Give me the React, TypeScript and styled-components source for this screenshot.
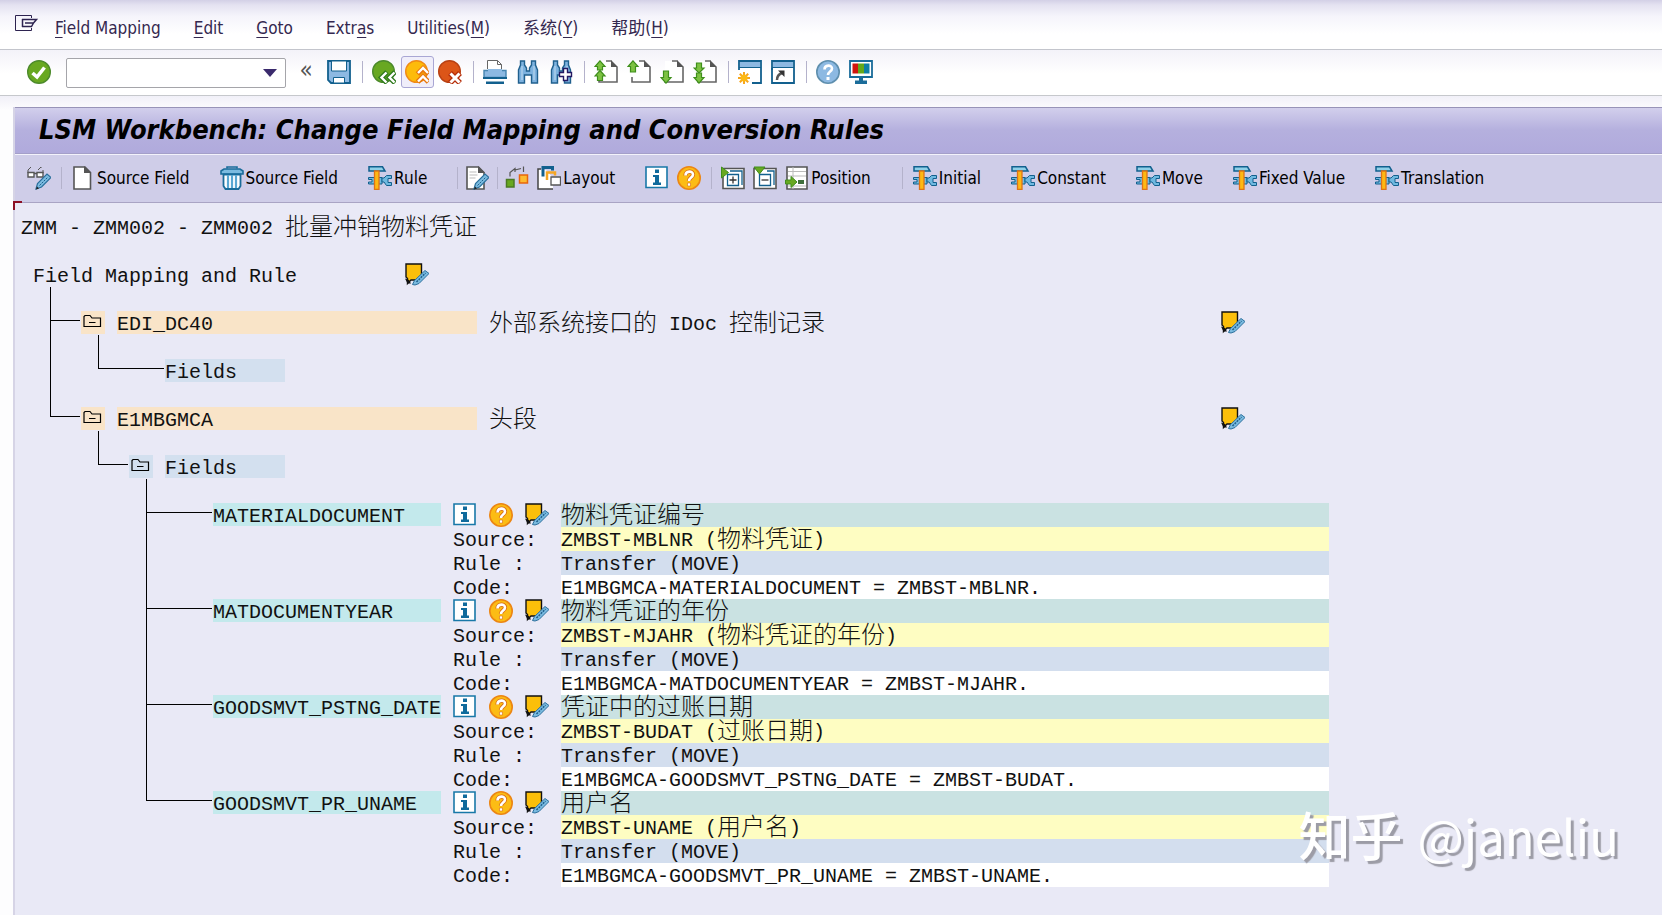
import React from "react";
import styled, { createGlobalStyle, css } from "styled-components";

const UI_FONT = `"DejaVu Sans Condensed", "Noto Sans", "Noto Sans CJK SC", sans-serif`;
const LIST_FONT = `"Liberation Mono", "Noto Sans CJK SC", monospace`;

const GlobalStyle = createGlobalStyle`
  *, *::before, *::after { box-sizing: border-box; }
  body { margin: 0; background: #fff; font-family: ${UI_FONT}; }
  button { font: inherit; color: inherit; background: none; border: 0; padding: 0; margin: 0; cursor: pointer; }
  h1, p, ul { margin: 0; padding: 0; }
  ul { list-style: none; }
  svg { display: block; flex: none; }
`;

/* ---------- icons ---------- */

const Svg = ({ children, size = 24 }: { children: React.ReactNode; size?: number }) => (
  <svg width={size} height={size} viewBox="0 0 24 24" fill="none" aria-hidden="true">
    {children}
  </svg>
);

const MenuExitIcon = () => (
  <Svg>
    <path d="M16.500 5V2.500H.500v15h16V15" stroke="#2d2350" />
    <path d="M7 6.500h14.500L18.500 10H12M7.500 6v8M7 13.500h9.500L18.500 10M12 10h-2" stroke="#2d2350" strokeWidth="1.500" />
  </Svg>
);

const CheckIcon = () => (
  <Svg>
    <circle cx="12" cy="12" r="11.300" fill="#68a821" stroke="#4c8a2c" strokeWidth="1.400" />
    <path d="M5.500 13l4.500 4L17.500 7.500" stroke="#fff" strokeWidth="3.600" />
  </Svg>
);

const SaveIcon = () => (
  <Svg>
    <path d="M1 1h22v22H4l-3-3z" fill="#8db9e2" stroke="#12608e" strokeWidth="1.800" />
    <path d="M4.500 1h15v10h-15z" fill="#fff" stroke="#12608e" />
    <path d="M6.500 17.500h11V23h-11z" fill="#fff" stroke="#12608e" />
  </Svg>
);

const BackIcon = () => (
  <Svg>
    <circle cx="11.500" cy="11.500" r="10.800" fill="#68a821" stroke="#4c8a2c" strokeWidth="1.400" />
    <path d="M15 12l-5.500 5.500L15 23M23 12l-5.500 5.500L23 23" stroke="#2f7a1c" strokeWidth="5" />
    <path d="M14.500 12.500l-5 5 5 5M22.500 12.500l-5 5 5 5" stroke="#fff" strokeWidth="2.400" />
  </Svg>
);

const UpIcon = () => (
  <Svg>
    <circle cx="11.500" cy="11.500" r="10.800" fill="#fdbb0a" stroke="#f08a16" strokeWidth="1.400" />
    <path d="M12.500 14l5.500-5.500 5.500 5.500M12.500 22l5.500-5.500 5.500 5.500" stroke="#e8770c" strokeWidth="5" />
    <path d="M13 13l5-5 5 5M13 21.500l5-5 5 5" stroke="#fff" strokeWidth="2.400" />
  </Svg>
);

const CancelIcon = () => (
  <Svg>
    <circle cx="11.500" cy="11.500" r="10.800" fill="#dc5518" stroke="#b84114" strokeWidth="1.400" />
    <path d="M12 13l10 10M22 13L12 23" stroke="#b52d08" strokeWidth="5.500" />
    <path d="M12.500 13.500l9 9M21.500 13.500l-9 9" stroke="#fff" strokeWidth="3" />
  </Svg>
);

const PrintIcon = () => (
  <Svg>
    <path d="M4.500 9V.500h10l4 4V9" fill="#fff" stroke="#666" />
    <path d="M14.500.500v4h4" stroke="#666" />
    <path d="M1 10.500h22v7H1z" fill="#8db9e2" stroke="#4685b0" strokeWidth="1.400" />
    <path d="M5 9h14v3H5z" fill="#8db9e2" />
    <path d="M0 17h24v2H0zM3 21.500h18V24H3z" fill="#12608e" />
  </Svg>
);

const Binoculars = () => (
  <>
    <path d="M4.500 1h4v4l2 3v3h3V8l2-3V1h4v4L21.500 10v13h-6v-8h-7v8h-6V10L4.500 5z" fill="#7db2df" stroke="#20608e" strokeWidth="1.400" />
    <path d="M6 6v14M18 6v14" stroke="#c3dcf1" />
  </>
);

const FindIcon = () => (
  <Svg>
    <Binoculars />
  </Svg>
);

const FindNextIcon = () => (
  <Svg>
    <Binoculars />
    <path d="M14.500 8.500h4v4h4v4h-4v4h-4v-4h-4v-4h4z" fill="#fff" stroke="#241a64" strokeWidth="1.400" />
  </Svg>
);

const PAGE_ARROWS = {
  first: ["M6 .800l5 5.700H8.500v3.500h-5V6.500H1z", "M6 10.500l5 5.500H8.500v4.500h-5V16H1z"],
  previous: ["M6 .800l5 5.700H8.500v5.500h-5V6.500H1z"],
  next: ["M6 23.200l5-5.700H8.500V11h-5v6.500H1z"],
  last: ["M6 13l5-5H8.500V3h-5v5H1z", "M6 23.200l5-5.700H8.500V13h-5v4.500H1z"],
};

const PageIcon = ({ kind }: { kind: keyof typeof PAGE_ARROWS }) => (
  <Svg>
    <path d="M5 1h13l5 5v16H5z" fill="#fff" />
    <path d="M12 1h5.500M23 7v15H5v-5" stroke="#666" strokeWidth="1.600" />
    <path d="M17 0l7 7h-7z" fill="#555" />
    {PAGE_ARROWS[kind].map((d) => (
      <path key={d} d={d} fill="#7dc242" stroke="#3f8f1c" strokeWidth="1.200" />
    ))}
  </Svg>
);

const SessionWindow = () => (
  <>
    <path d="M1 1h22v22H1z" fill="#fff" />
    <path d="M1 7V1h22v22h-9M1 7v3" stroke="#12608e" strokeWidth="1.800" />
    <path d="M2 2h20v5H2z" fill="#8db9e2" />
    <path d="M1 7.500h22" stroke="#12608e" />
  </>
);

const NewSessionIcon = () => (
  <Svg>
    <SessionWindow />
    <path d="M6 12v12M0 18h12M1.800 13.800l8.400 8.400M10.200 13.800l-8.400 8.400" stroke="#f6a51c" strokeWidth="2" />
    <circle cx="6" cy="18" r="3.500" fill="#fcb913" />
  </Svg>
);

const ShortcutIcon = () => (
  <Svg>
    <SessionWindow />
    <path d="M1 8v15h14" stroke="#12608e" strokeWidth="1.800" />
    <path d="M6 20c0-4 2-6 5-7" stroke="#555" strokeWidth="2.500" />
    <path d="M7 10.500h6.500V17z" fill="#333" />
  </Svg>
);

const HelpIcon = () => (
  <Svg>
    <circle cx="12" cy="12" r="11.200" fill="#8db9e2" stroke="#5f8fae" strokeWidth="1.600" />
    <path d="M8.500 9.500c0-5 7.500-5 7.500-1 0 3-4 3-4 6.500" stroke="#fff" strokeWidth="2.600" />
    <path d="M10.500 17h3v3h-3z" fill="#fff" />
  </Svg>
);

const MonitorIcon = () => (
  <Svg>
    <path d="M1 1h22v16H1z" fill="#fff" stroke="#1a6c9a" strokeWidth="1.800" />
    <path d="M3.500 3.500h5.500v10H3.500z" fill="#d0160c" />
    <path d="M9 3.500h6v10H9z" fill="#64a818" />
    <path d="M15 3.500h5.500v10H15z" fill="#0e7fa4" />
    <path d="M10 17h4v4h-4zM6 20.500h12V24H6z" fill="#1a6c9a" />
  </Svg>
);

const Pencil = () => (
  <>
    <path d="M9 23l1.500-5.500L20 8l4 3.500-9.500 9.500z" fill="#7bbbe0" stroke="#2a6f9c" strokeWidth="1.200" />
    <path d="M12.500 19.500l8-8" stroke="#1d5f8c" strokeDasharray="2 1" />
    <path d="M9 23.500l1-3 2 2z" fill="#222" />
  </>
);

const DisplayChangeIcon = () => (
  <Svg>
    <path d="M1 7V4l3-3M11 4l3-3v1M16 4v3" stroke="#555" />
    <path d="M1 6.500h6v4.500H1zM10 6.500h6v4.500h-6zM7 7.500h3" fill="#fff" stroke="#555" strokeWidth="1.400" />
    <Pencil />
  </Svg>
);

const NewPageIcon = () => (
  <Svg>
    <path d="M3 1h11l5.500 5.500V23H3z" fill="#fff" stroke="#555" strokeWidth="1.600" />
    <path d="M13 0l7 7h-7z" fill="#555" />
  </Svg>
);

const TrashIcon = () => (
  <Svg>
    <path d="M7 2.500V1h10v1.500" stroke="#1a6c9a" strokeWidth="1.600" />
    <path d="M4 3h16l3 2v3H1V5z" fill="#7bbbe0" stroke="#1a6c9a" strokeWidth="1.600" />
    <path d="M3.500 8.500h17V20l-2 3h-13l-2-3z" fill="#fff" stroke="#1a6c9a" strokeWidth="1.800" />
    <path d="M8 9v13M12 9v13M16 9v13" stroke="#5aa7d2" strokeWidth="2.200" />
  </Svg>
);

const RuleIcon = () => (
  <Svg>
    <path d="M.500 11.500H14V18H.500v-2H4v-2.500H.500z" fill="#6fb9e0" stroke="#12608e" />
    <path d="M23.500 9.500h-5l-2.500 2.500h-2v4h2l2.500 3.500h5v-3h-3.500v-4h3.500z" fill="#6fb9e0" stroke="#12608e" />
    <path d="M1 .800h13.500L17 5H1z" fill="#8fd0e8" stroke="#12608e" strokeWidth="1.500" />
    <path d="M6.500 5h4.500v18.500H6.500z" fill="#fdb913" stroke="#e07414" strokeWidth="1.300" />
  </Svg>
);

const NoteEditIcon = () => (
  <Svg>
    <path d="M2 1h11.500L19 6.500V23H2z" fill="#fff" stroke="#555" strokeWidth="1.600" />
    <path d="M13 0l7 7h-7z" fill="#555" />
    <path d="M4.500 6h7M4.500 9h8M4.500 12h6" stroke="#bbb" />
    <Pencil />
  </Svg>
);

const AssignIcon = () => (
  <Svg>
    <path d="M5 10.500V6.500L10 2.500V6M10 4l6-1.500M18.500.500V6" stroke="#555" strokeWidth="1.200" />
    <path d="M1.500 13.500h7.500V21H1.500z" fill="#68a821" stroke="#4c7a24" strokeWidth="1.500" />
    <path d="M14.500 9h8v8h-8z" fill="#fdbb30" stroke="#e8650c" strokeWidth="1.500" />
  </Svg>
);

const LayoutIcon = () => (
  <Svg>
    <path d="M1 3v20h15V12L9 4z" fill="#fff" />
    <path d="M4 3H1v20h15" stroke="#444" strokeWidth="1.500" />
    <path d="M6 10.500V1.500h9.500v3" stroke="#12608e" strokeWidth="3" />
    <path d="M10 14V6.500h8v3" stroke="#f5a623" strokeWidth="2.500" />
    <path d="M14 11h9.500v8H14z" fill="#fff" stroke="#555" strokeWidth="1.300" />
  </Svg>
);

const InfoIcon = () => (
  <Svg>
    <path d="M1 1h21v20.500H1z" fill="#fff" stroke="#1878a8" strokeWidth="1.600" />
    <path d="M10 3.500h4v3.500h-4zM8 9h6v7.500h2V19H8v-2.500h2V11H8z" fill="#0f6a9c" />
  </Svg>
);

const QuestionIcon = () => (
  <Svg>
    <circle cx="12" cy="12" r="11.200" fill="#fcbc14" stroke="#ec8614" strokeWidth="1.600" />
    <path d="M8.500 9.500c0-5 7.500-5 7.500-1 0 3-4 3-4 6.500" stroke="#d86a10" strokeWidth="4.200" />
    <path d="M8.500 9.500c0-5 7.500-5 7.500-1 0 3-4 3-4 6.500" stroke="#fff" strokeWidth="2.600" />
    <path d="M10.500 17h3v3h-3z" fill="#fff" stroke="#d86a10" strokeWidth=".600" />
  </Svg>
);

const ExpandIcon = () => (
  <Svg>
    <path d="M2 2.500h21v20H2z" fill="#fff" stroke="#555" strokeWidth="1.600" />
    <path d="M6.500 8.500h11v11h-11zM9 5h12v14" fill="none" stroke="#12608e" strokeWidth="1.300" />
    <path d="M12 10.500v7M8.500 14h7" stroke="#333" strokeWidth="1.300" />
    <path d="M.500 1l7 5.500-7 5.500z" fill="#68a821" stroke="#3f8f1c" />
  </Svg>
);

const CollapseIcon = () => (
  <Svg>
    <path d="M1 2.500h22v20H1z" fill="#fff" stroke="#555" strokeWidth="1.600" />
    <path d="M6.500 8.500h11v11h-11zM14 5h7v14" fill="none" stroke="#12608e" strokeWidth="1.300" />
    <path d="M8.500 14h7" stroke="#333" strokeWidth="1.300" />
    <path d="M1 1h11L6.500 8z" fill="#68a821" stroke="#3f8f1c" />
  </Svg>
);

const PositionIcon = () => (
  <Svg>
    <path d="M2 1h20v22H2z" fill="#fff" stroke="#555" strokeWidth="1.600" />
    <path d="M3 5.500h18M8 1v22M3 10h18M3 20h18" stroke="#bbb" />
    <path d="M13 14h6v4h-6z" fill="#3f6f3c" />
    <path d="M.500 14H6v-3.500l6 5.500-6 5.500V18H.500z" fill="#68a821" stroke="#3f8f1c" />
  </Svg>
);

const NoteIcon = () => (
  <Svg>
    <path d="M1 1h15.500v13l-3 3H6l-3.500 3.500v-5L1 14z" fill="#fcbf0a" stroke="#111" strokeWidth="1.400" />
    <path d="M0 15.500l4 1.500 2 3.500H2.500z" fill="#111" />
    <path d="M7.500 21.500l2-4L20 7.500l4 3-10 10-4 1.500z" fill="#7bbbe0" stroke="#2a6f9c" />
    <path d="M11.500 19l9-9" stroke="#1d5f8c" strokeWidth="1.500" strokeDasharray="2 1" />
  </Svg>
);

const FolderIcon = () => (
  <Svg>
    <path d="M3 15.500V5.500l1-1h5l2 2.500h8.500v8.500z" stroke="#000" strokeWidth="1.200" />
    <path d="M8 11.500h6.500" stroke="#000" />
  </Svg>
);

/* ---------- window bars ---------- */

const Page = styled.div`
  position: relative;
  display: flex;
  flex-direction: column;
  min-height: 100vh;
  background: linear-gradient(#f1f0f8, #fdfdfe 14px) 0 96px no-repeat;
`;

const MenuBar = styled.nav`
  display: flex;
  align-items: center;
  gap: 33px;
  height: 50px;
  padding: 6px 15px 0;
  background: linear-gradient(#d3d0e6, #e4e2f1 5px, #f5f4fb 16px, #fff 34px);
  border-bottom: 1px solid #c3c5cc;
  color: #34284f;
  font-size: 17px;
  line-height: 24px;
  white-space: nowrap;
`;

const MenuItem = styled.button`
  text-underline-offset: 3px;
`;

const MenuIconButton = styled.button`
  margin: 0 -17px 6px 0;
`;

const SystemToolbar = styled.div`
  display: flex;
  align-items: center;
  height: 46px;
  padding: 0 23px 2px;
  background: linear-gradient(#f3f2f9, #fff 24px);
  border-bottom: 1px solid #c6c8cc;
`;

const IconButton = styled.button<{ $active?: boolean }>`
  display: flex;
  align-items: center;
  width: 33px;
  height: 32px;
  padding-left: 4px;
  ${(p) =>
    p.$active &&
    css`
      padding-left: 3px;
      background: #f0eefa;
      border: 1px solid #a9a6d4;
      border-radius: 3px;
    `}
`;

const CommandField = styled.div`
  display: flex;
  width: 220px;
  height: 30px;
  margin: 2px 8px 0 10px;
  background: #fff;
  border: 1px solid #a5a5aa;
  border-radius: 2px;
`;

const CommandInput = styled.input`
  flex: 1;
  min-width: 0;
  border: 0;
  padding: 0 6px;
  outline: 0;
  background: none;
  font: 17px ${UI_FONT};
`;

const CommandArrow = styled.button`
  display: flex;
  align-items: center;
  justify-content: center;
  width: 30px;
`;

const CollapseToolbar = styled.button`
  width: 29px;
  padding: 0 5px 4px 0;
  color: #555;
  font-size: 24px;
  line-height: 24px;
`;

const Divider = styled.span<{ $narrow?: boolean }>`
  flex: none;
  width: ${(p) => (p.$narrow ? 8 : 12)}px;
  height: 22px;
  background: linear-gradient(#b4b2cb, #b4b2cb) center / 1px 100% no-repeat;
`;

const Workspace = styled.main`
  flex: 1;
  display: flex;
  flex-direction: column;
  margin: 11px 0 0 13px;
  border-left: 2px solid #d6d4e6;
`;

const TitleBar = styled.header`
  height: 47px;
  padding-left: 24px;
  background: linear-gradient(#d2cfec, #b5b0de 22px, #b0aadc);
  border-top: 1px solid #9894b8;
  border-bottom: 1px solid #a49fc9;
`;

const Title = styled.h1`
  font-size: 27px;
  line-height: 44px;
  font-style: italic;
  font-weight: 700;
  white-space: nowrap;
  color: #000;
`;

const AppToolbar = styled.div`
  display: flex;
  align-items: center;
  height: 49px;
  padding: 0 0 2px 8px;
  background: #cfcde8;
  border-top: 1px solid #f3f2fb;
  border-bottom: 1px solid #a9a4c4;
  font-size: 17px;
  line-height: 24px;

  ${IconButton} {
    width: 32px;
  }
`;

const ToolButton = styled.button`
  display: flex;
  align-items: center;
  gap: 2px;
  margin-right: 22px;
  padding: 0 4px;
  color: #000;
  white-space: nowrap;
`;

/* ---------- list output ---------- */

const List = styled.section`
  flex: 1;
  position: relative;
  padding: 12px 6px 24px;
  background: #e9e9f6;
  color: #111;
  font-family: ${LIST_FONT};
  font-size: 20px;
  line-height: 28px;
  white-space: pre;
`;

const CursorCorner = styled.span`
  position: absolute;
  left: -2px;
  top: -2px;
  width: 9px;
  height: 9px;
  border-top: 2px solid #8c0f24;
  border-left: 2px solid #8c0f24;
`;

const Line = styled.div`
  display: flex;
  height: 24px;
`;

const HeadingLine = styled(Line)`
  margin-top: 24px;
  padding-left: 12px;
`;

const HeadingText = styled.span`
  width: 372px;
`;

const Wide = styled.span`
  font-size: 24px;
  font-weight: 300;
  line-height: 0;
  vertical-align: -1px;
`;

const InlineIcon = styled.button`
  width: 24px;
  height: 24px;
`;

const Tree = styled.ul<{ $indent: number }>`
  padding-left: ${(p) => p.$indent}px;
`;

const Branch = styled.li`
  display: flex;
`;

const Rail = styled.div<{ $wide?: boolean }>`
  flex: none;
  display: flex;
  flex-direction: column;
  width: ${(p) => (p.$wide ? 67 : 31)}px;
`;

const Elbow = styled.span<{ $spaced?: boolean }>`
  height: ${(p) => (p.$spaced ? 34 : 10)}px;
  margin-right: 1px;
  border-left: 1px solid #000;
  border-bottom: 1px solid #000;
`;

const RailRest = styled.span`
  flex: 1;
  border-left: 1px solid #000;
`;

const Node = styled.div<{ $spaced?: boolean }>`
  flex: 1;
  min-width: 0;
  padding-top: ${(p) => (p.$spaced ? 24 : 0)}px;
`;

const TONES = {
  segment: "#f9e4c8",
  group: "#d3e0ef",
  field: "#c3e9ec",
};

const Fold = styled.button<{ $tone: keyof typeof TONES }>`
  width: 24px;
  height: 23px;
  margin-right: 12px;
  background: ${(p) => TONES[p.$tone]};
`;

const Label = styled.span<{ $tone: keyof typeof TONES }>`
  flex: none;
  width: ${(p) => ({ segment: 360, group: 120, field: 228 })[p.$tone]}px;
  height: 23px;
  margin-right: 12px;
  background: ${(p) => TONES[p.$tone]};
`;

const SegmentText = styled.span`
  width: 732px;
`;

const FieldRow = styled.div`
  display: flex;
`;

const Details = styled.div`
  flex: 0 1 876px;
  display: grid;
  grid-template-columns: 108px 1fr;
  grid-auto-rows: 24px;
`;

const FieldIcons = styled.div`
  display: flex;
  gap: 12px;
`;

const BANDS = {
  text: "#cae2e2",
  source: "#fefdc2",
  rule: "#d3deee",
  code: "#ffffff",
};

const Band = styled.span<{ $band: keyof typeof BANDS }>`
  background: ${(p) => BANDS[p.$band]};
`;

const Watermark = styled.p`
  position: absolute;
  right: 43px;
  bottom: 44px;
  display: flex;
  align-items: baseline;
  gap: 15px;
  color: #fff;
  font-family: "Noto Sans CJK SC", sans-serif;
  font-size: 49px;
  font-weight: 400;
  line-height: 72px;
  text-shadow: 3px 3px 1px #9c9ca6;
  white-space: nowrap;
  pointer-events: none;
`;

const WatermarkSite = styled.span`
  font-size: 52px;
  font-weight: 500;
`;

/* Ideographs take two list columns, so they are set larger than the Latin text. */
const ListText = ({ children }: { children: string }) => (
  <>
    {children.split(/([\u4e00-\u9fff]+)/).map((part, i) => (i % 2 ? <Wide key={i}>{part}</Wide> : part))}
  </>
);

const MENUS = [
  ["", "F", "ield Mapping"],
  ["", "E", "dit"],
  ["", "G", "oto"],
  ["Extr", "a", "s"],
  ["Utilities(", "M", ")"],
  ["系统(", "Y", ")"],
  ["帮助(", "H", ")"],
];

const FIELDS = [
  { name: "MATERIALDOCUMENT", text: "物料凭证编号", source: "ZMBST-MBLNR", sourceText: "物料凭证" },
  { name: "MATDOCUMENTYEAR", text: "物料凭证的年份", source: "ZMBST-MJAHR", sourceText: "物料凭证的年份" },
  { name: "GOODSMVT_PSTNG_DATE", text: "凭证中的过账日期", source: "ZMBST-BUDAT", sourceText: "过账日期" },
  { name: "GOODSMVT_PR_UNAME", text: "用户名", source: "ZMBST-UNAME", sourceText: "用户名" },
];

const Tool = ({ label, icon, active }: { label: string; icon: React.ReactNode; active?: boolean }) => (
  <IconButton type="button" aria-label={label} $active={active}>
    {icon}
  </IconButton>
);

const LabelledTool = ({ label, icon }: { label: string; icon: React.ReactNode }) => (
  <ToolButton type="button">
    {icon}
    {label}
  </ToolButton>
);

const EditNote = () => (
  <InlineIcon type="button" aria-label="Edit note">
    <NoteIcon />
  </InlineIcon>
);

const TreeItem = ({
  children,
  wide,
  spaced,
  last,
}: {
  children: React.ReactNode;
  wide?: boolean;
  spaced?: boolean;
  last?: boolean;
}) => (
  <Branch>
    <Rail $wide={wide}>
      <Elbow $spaced={spaced} />
      {!last && <RailRest />}
    </Rail>
    <Node $spaced={spaced}>{children}</Node>
  </Branch>
);

const SegmentLine = ({ name, text }: { name: string; text: string }) => (
  <Line>
    <Fold type="button" $tone="segment" aria-label={`Collapse ${name}`}>
      <FolderIcon />
    </Fold>
    <Label $tone="segment">{name}</Label>
    <SegmentText>
      <ListText>{text}</ListText>
    </SegmentText>
    <EditNote />
  </Line>
);

const Field = ({ name, text, source, sourceText }: (typeof FIELDS)[number]) => (
  <FieldRow>
    <Label $tone="field">{name}</Label>
    <Details>
      <FieldIcons>
        <InlineIcon type="button" aria-label={`Information on ${name}`}>
          <InfoIcon />
        </InlineIcon>
        <InlineIcon type="button" aria-label={`Documentation of ${name}`}>
          <QuestionIcon />
        </InlineIcon>
        <EditNote />
      </FieldIcons>
      <Band $band="text">
        <ListText>{text}</ListText>
      </Band>
      <span>Source:</span>
      <Band $band="source">
        <ListText>{`${source} (${sourceText})`}</ListText>
      </Band>
      <span>Rule :</span>
      <Band $band="rule">Transfer (MOVE)</Band>
      <span>Code:</span>
      <Band $band="code">{`E1MBGMCA-${name} = ${source}.`}</Band>
    </Details>
  </FieldRow>
);

export default function App() {
  return (
    <Page>
      <GlobalStyle />
      <MenuBar aria-label="Menu bar">
        <MenuIconButton type="button" aria-label="System menu">
          <MenuExitIcon />
        </MenuIconButton>
        {MENUS.map(([before, key, after]) => (
          <MenuItem type="button" key={before + key}>
            {before}
            <u>{key}</u>
            {after}
          </MenuItem>
        ))}
      </MenuBar>

      <SystemToolbar role="toolbar" aria-label="System toolbar">
        <Tool label="Enter" icon={<CheckIcon />} />
        <CommandField>
          <CommandInput type="text" aria-label="Command" />
          <CommandArrow type="button" aria-label="Command history">
            <svg width="14" height="8" viewBox="0 0 14 8" aria-hidden="true">
              <path d="M0 0h14L7 8z" fill="#3a2a6c" />
            </svg>
          </CommandArrow>
        </CommandField>
        <CollapseToolbar type="button" aria-label="Hide command field">
          «
        </CollapseToolbar>
        <Tool label="Save" icon={<SaveIcon />} />
        <Divider />
        <Tool label="Back" icon={<BackIcon />} />
        <Tool label="Exit" icon={<UpIcon />} active />
        <Tool label="Cancel" icon={<CancelIcon />} />
        <Divider />
        <Tool label="Print" icon={<PrintIcon />} />
        <Tool label="Find" icon={<FindIcon />} />
        <Tool label="Find next" icon={<FindNextIcon />} />
        <Divider />
        <Tool label="First page" icon={<PageIcon kind="first" />} />
        <Tool label="Previous page" icon={<PageIcon kind="previous" />} />
        <Tool label="Next page" icon={<PageIcon kind="next" />} />
        <Tool label="Last page" icon={<PageIcon kind="last" />} />
        <Divider />
        <Tool label="New session" icon={<NewSessionIcon />} />
        <Tool label="Create shortcut" icon={<ShortcutIcon />} />
        <Divider />
        <Tool label="Help" icon={<HelpIcon />} />
        <Tool label="Customize local layout" icon={<MonitorIcon />} />
      </SystemToolbar>

      <Workspace>
        <TitleBar>
          <Title>LSM Workbench: Change Field Mapping and Conversion Rules</Title>
        </TitleBar>

        <AppToolbar role="toolbar" aria-label="Application toolbar">
          <Tool label="Display or change" icon={<DisplayChangeIcon />} />
          <Divider />
          <LabelledTool label="Source Field" icon={<NewPageIcon />} />
          <LabelledTool label="Source Field" icon={<TrashIcon />} />
          <LabelledTool label="Rule" icon={<RuleIcon />} />
          <Divider $narrow />
          <Tool label="Edit text" icon={<NoteEditIcon />} />
          <Divider $narrow />
          <Tool label="Assign" icon={<AssignIcon />} />
          <LabelledTool label="Layout" icon={<LayoutIcon />} />
          <Tool label="Information" icon={<InfoIcon />} />
          <Tool label="Documentation" icon={<QuestionIcon />} />
          <Divider />
          <Tool label="Expand" icon={<ExpandIcon />} />
          <Tool label="Collapse" icon={<CollapseIcon />} />
          <LabelledTool label="Position" icon={<PositionIcon />} />
          <Divider />
          <LabelledTool label="Initial" icon={<RuleIcon />} />
          <LabelledTool label="Constant" icon={<RuleIcon />} />
          <LabelledTool label="Move" icon={<RuleIcon />} />
          <LabelledTool label="Fixed Value" icon={<RuleIcon />} />
          <LabelledTool label="Translation" icon={<RuleIcon />} />
        </AppToolbar>

        <List>
          <CursorCorner />
          <Line>
            <span>
              <ListText>ZMM - ZMM002 - ZMM002 批量冲销物料凭证</ListText>
            </span>
          </Line>
          <HeadingLine>
            <HeadingText>Field Mapping and Rule</HeadingText>
            <EditNote />
          </HeadingLine>

          <Tree $indent={29}>
            <TreeItem spaced>
              <SegmentLine name="EDI_DC40" text="外部系统接口的 IDoc 控制记录" />
              <Tree $indent={17}>
                <TreeItem wide spaced last>
                  <Line>
                    <Label $tone="group">Fields</Label>
                  </Line>
                </TreeItem>
              </Tree>
            </TreeItem>
            <TreeItem spaced last>
              <SegmentLine name="E1MBGMCA" text="头段" />
              <Tree $indent={17}>
                <TreeItem spaced last>
                  <Line>
                    <Fold type="button" $tone="group" aria-label="Collapse Fields">
                      <FolderIcon />
                    </Fold>
                    <Label $tone="group">Fields</Label>
                  </Line>
                  <Tree $indent={17}>
                    {FIELDS.map((field, i) => (
                      <TreeItem key={field.name} wide spaced={i === 0} last={i === FIELDS.length - 1}>
                        <Field {...field} />
                      </TreeItem>
                    ))}
                  </Tree>
                </TreeItem>
              </Tree>
            </TreeItem>
          </Tree>
        </List>
      </Workspace>

      <Watermark>
        <WatermarkSite>知乎</WatermarkSite>
        <span>@janeliu</span>
      </Watermark>
    </Page>
  );
}
